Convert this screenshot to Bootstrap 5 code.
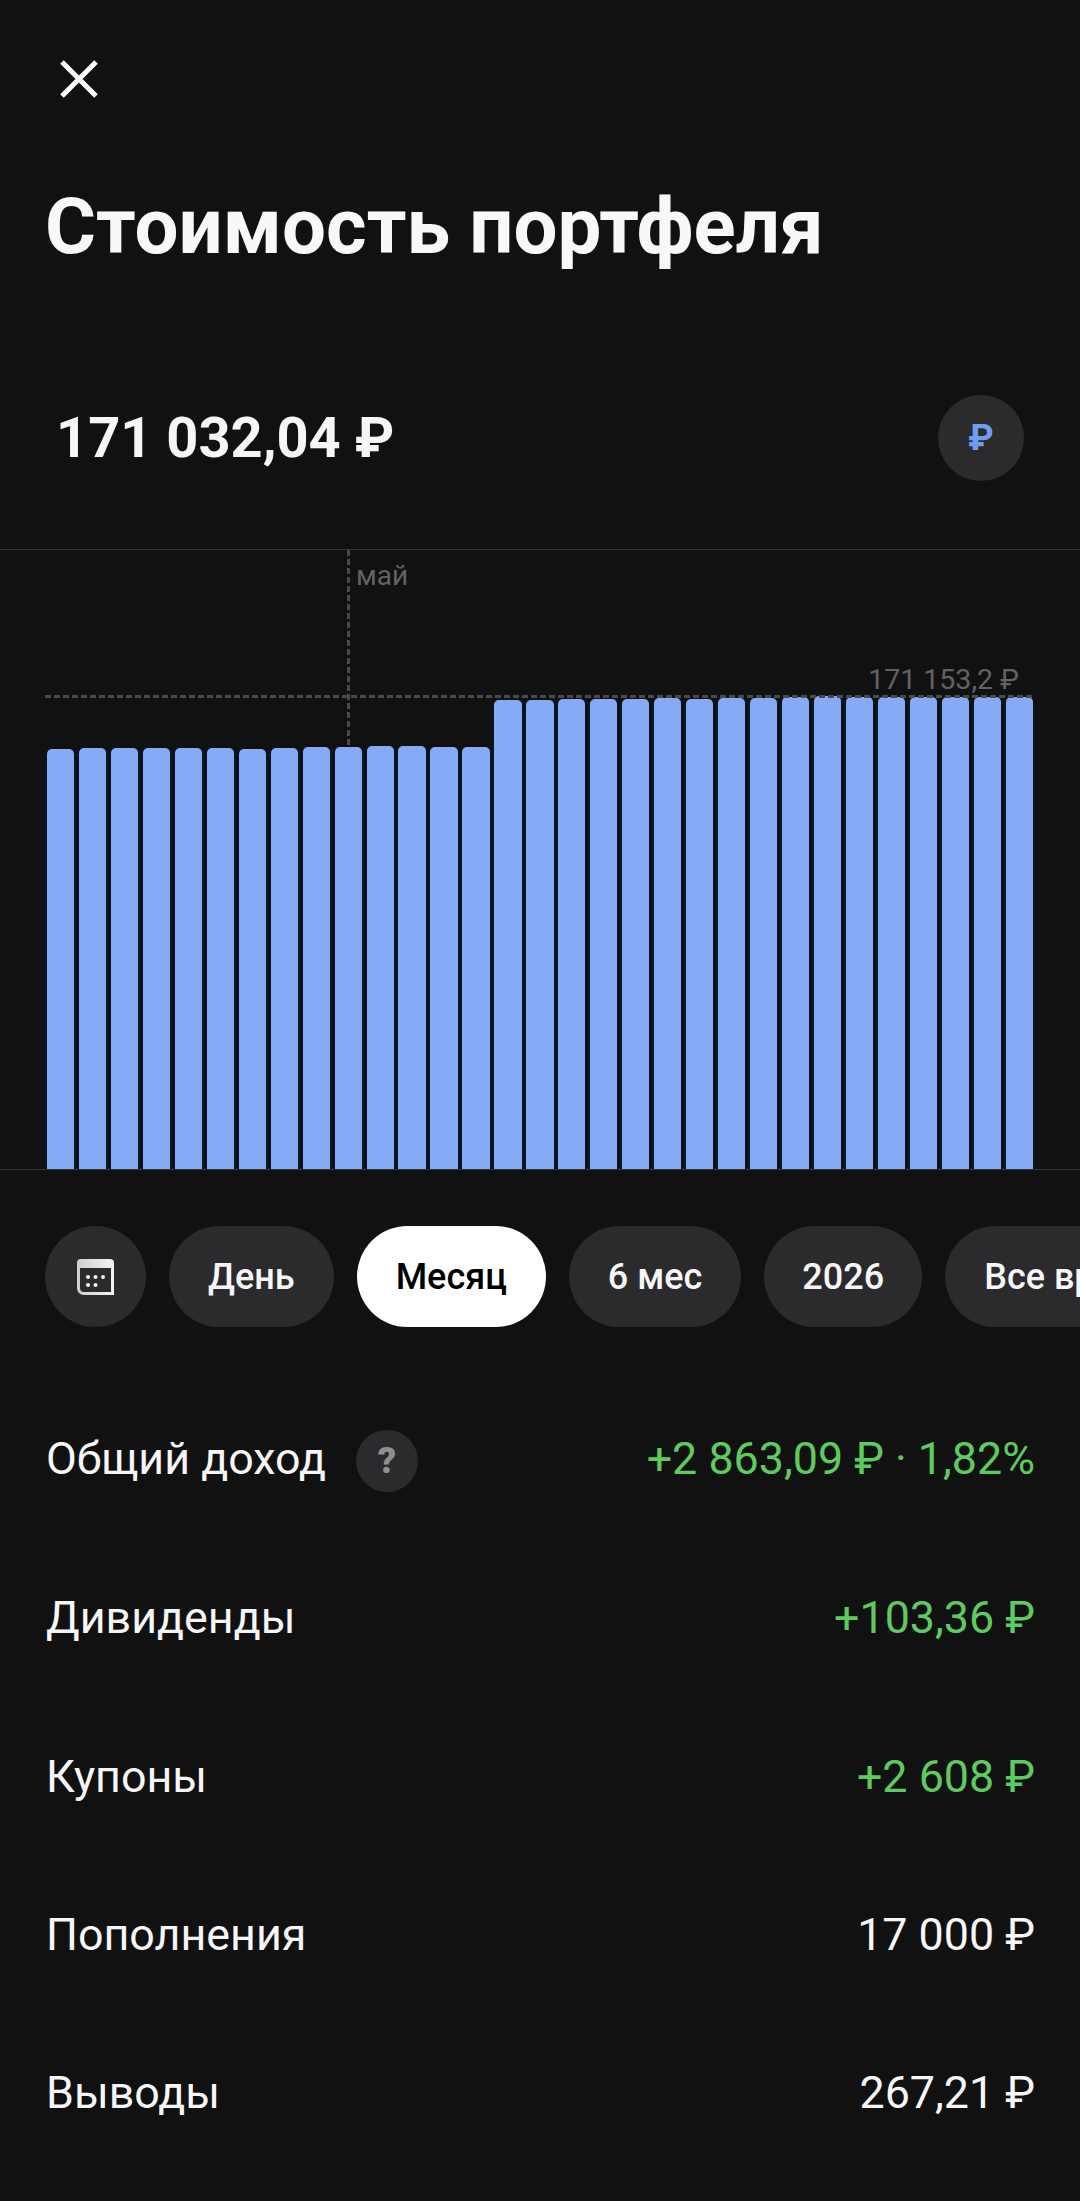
<!DOCTYPE html>
<html lang="ru">
<head>
  <meta charset="UTF-8" />
  <meta name="viewport" content="width=device-width, initial-scale=1.0"/>
  <title>Стоимость портфеля</title>
  <link href="https://cdn.jsdelivr.net/npm/bootstrap@5.3.3/dist/css/bootstrap.min.css" rel="stylesheet">
  <style>
    body {
      background: #111112;
      color: #f6f6f7;
      font-family: Roboto, "Noto Sans", sans-serif;
      width: 1080px;
      height: 2201px;
      overflow: hidden;
    }
    .close-wrap { padding: 60px 0 0 60px; line-height: 0; }
    .page-title {
      font-size: 78px;
      font-weight: 700;
      line-height: 91px;
      margin: 83px 0 0 45px;
      color: #f8f8f9;
    }
    .total-row { margin-top: 123px; padding: 0 56px 68px 56px; }
    .total-sum { font-size: 56px; font-weight: 700; line-height: 65px; }
    .cur-circle {
      width: 86px;
      height: 86px;
      background: #2b2b2d;
      color: #6f9ef0;
      font-size: 36px;
      font-weight: 700;
    }
    .chart-box {
      height: 621px;
      border-top: 1px solid #343436;
      border-bottom: 1px solid #343436;
    }
    .chart-bars {
      height: 100%;
      padding: 0 47px 0 47px;
      gap: 4.75px;
    }
    .chart-bar {
      flex: 1 1 0;
      background: #86aaf5;
      border-radius: 5px 5px 0 0;
      box-shadow: 1.5px 0 0 #0a1424, -1.5px 0 0 #0a1424;
    }
    .line-v {
      position: absolute;
      left: 347px;
      top: 0;
      width: 3px;
      height: 196px;
      background: repeating-linear-gradient(to bottom, #4a4a4c 0 6px, transparent 6px 9px);
    }
    .line-h {
      position: absolute;
      left: 45px;
      right: 47px;
      top: 145px;
      height: 3px;
      background: repeating-linear-gradient(to right, #4a4a4c 0 6px, transparent 6px 9px);
    }
    .chart-label {
      position: absolute;
      color: #626264;
      line-height: 32px;
    }
    .label-month { left: 356px; top: 10px; font-size: 28px; }
    .label-max { right: 61px; top: 114px; font-size: 28.5px; }
    .period-row { margin-top: 56px; padding-left: 45px; gap: 23px; }
    .period-btn {
      flex: none;
      height: 101px;
      padding: 0 39px;
      background: #2b2b2d;
      color: #f6f6f7;
      font-size: 36px;
      font-weight: 500;
    }
    .period-btn.is-active { background: #fff; color: #000; }
    .period-cal { width: 101px; padding: 0; }
    .period-year { padding: 0 38px; }
    .stats { margin-top: 51px; padding: 0 45px 0 46px; }
    .stat-row { height: 158.4px; font-size: 44.8px; line-height: 52px; }
    .stat-first { height: 161px; }
    .stat-plus { color: #5ecb5f; }
    .help-circle {
      width: 62px;
      height: 62px;
      margin: 5px 0 0 30px;
      background: #2b2b2d;
      color: #8e8e93;
      font-size: 36px;
      font-weight: 900;
    }
  </style>
</head>
<body>
  <div class="close-wrap">
    <svg width="38" height="38" viewBox="0 0 38 38"><path d="M2 2 36 36M36 2 2 36" stroke="#fff" stroke-width="5" fill="none"/></svg>
  </div>
  <h1 class="page-title">Стоимость портфеля</h1>

  <div class="total-row d-flex justify-content-between align-items-center">
    <div class="total-sum">171 032,04 ₽</div>
    <div class="cur-circle rounded-circle d-flex align-items-center justify-content-center">₽</div>
  </div>

  <div class="chart-box position-relative">
    <div class="chart-bars d-flex align-items-end" id="bars"></div>
    <div class="line-v"></div>
    <div class="line-h"></div>
    <div class="chart-label label-month">май</div>
    <div class="chart-label label-max">171 153,2 ₽</div>
  </div>

  <div class="period-row d-flex overflow-hidden">
    <button class="btn period-btn period-cal rounded-pill border-0 d-flex align-items-center justify-content-center" aria-label="Календарь">
      <svg width="37" height="36" viewBox="0 0 37 36">
        <defs><linearGradient id="calTop" x1="0" y1="0" x2="1" y2="0"><stop offset="0" stop-color="#cfcfd1"/><stop offset="1" stop-color="#f4f4f5"/></linearGradient></defs>
        <path d="M4 0H33a4 4 0 0 1 4 4V36H7a7 7 0 0 1-7-7V4A4 4 0 0 1 4 0Z" fill="url(#calTop)"/>
        <path d="M3 9H34V33H7a4 4 0 0 1-4-4Z" fill="#2b2b2d"/>
        <g fill="#f4f4f5"><circle cx="11" cy="18" r="2"/><circle cx="18.5" cy="18" r="2"/><circle cx="26" cy="18" r="2"/><circle cx="11" cy="26" r="2"/><circle cx="18.5" cy="26" r="2"/></g>
      </svg>
    </button>
    <button class="btn period-btn rounded-pill border-0">День</button>
    <button class="btn period-btn is-active rounded-pill border-0">Месяц</button>
    <button class="btn period-btn rounded-pill border-0">6 мес</button>
    <button class="btn period-btn period-year rounded-pill border-0">2026</button>
    <button class="btn period-btn rounded-pill border-0">Все время</button>
  </div>

  <div class="stats">
    <div class="stat-row stat-first d-flex justify-content-between align-items-center">
      <div class="d-flex align-items-center">Общий доход <span class="help-circle rounded-circle d-flex align-items-center justify-content-center">?</span></div>
      <div class="stat-plus">+2 863,09 ₽ · 1,82%</div>
    </div>
    <div class="stat-row d-flex justify-content-between align-items-center">
      <div>Дивиденды</div>
      <div class="stat-plus">+103,36 ₽</div>
    </div>
    <div class="stat-row d-flex justify-content-between align-items-center">
      <div>Купоны</div>
      <div class="stat-plus">+2 608 ₽</div>
    </div>
    <div class="stat-row d-flex justify-content-between align-items-center">
      <div>Пополнения</div>
      <div>17 000 ₽</div>
    </div>
    <div class="stat-row d-flex justify-content-between align-items-center">
      <div>Выводы</div>
      <div>267,21 ₽</div>
    </div>
  </div>

  <script>
    // bar top positions read off the chart, in px from the chart bottom
    const heights = [420, 421, 421, 421, 421.5, 421, 420.5, 421, 422, 422.5, 423, 423, 422, 422,
      469, 469, 470.5, 470.5, 470.5, 471, 470.5, 471.5, 471.5, 472.5, 473, 472.5, 472.5, 472.5, 472.5, 472.5, 472.5];
    const bars = document.getElementById('bars');
    heights.forEach(h => {
      const bar = document.createElement('div');
      bar.className = 'chart-bar';
      bar.style.height = h + 'px';
      bars.appendChild(bar);
    });
  </script>
  <script src="https://cdn.jsdelivr.net/npm/bootstrap@5.3.3/dist/js/bootstrap.bundle.min.js"></script>
</body>
</html>
